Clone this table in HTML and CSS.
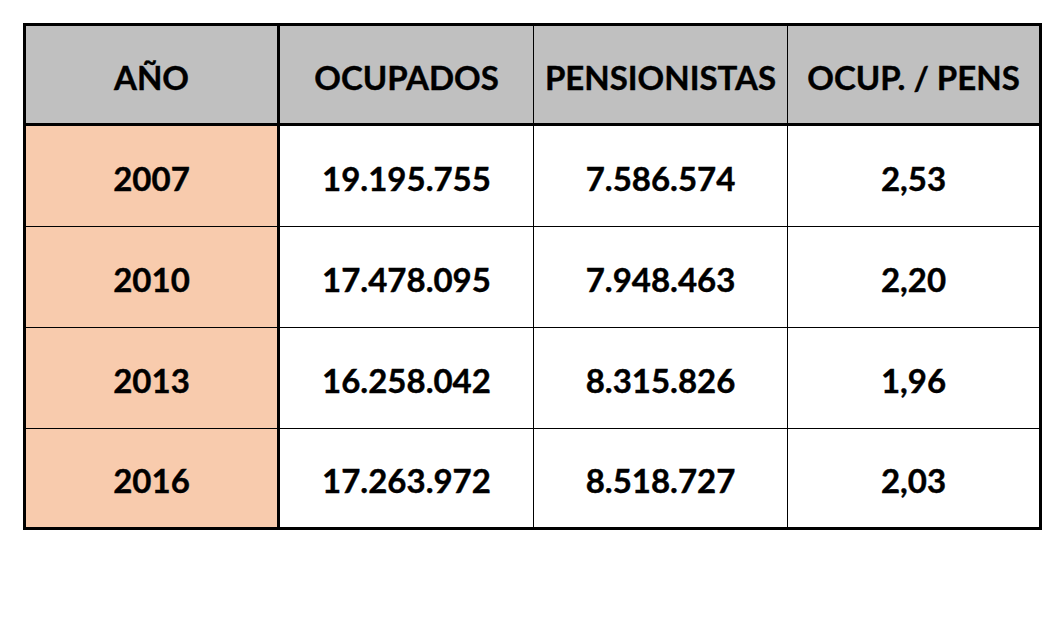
FILE: index.html
```html
<!DOCTYPE html>
<html lang="es">
<head>
<meta charset="utf-8">
<title>Ocupados / Pensionistas</title>
<link rel="stylesheet" href="styles.css">
</head>
<body>
<div class="grid">
  <div class="cell head first">AÑO</div>
  <div class="cell head">OCUPADOS</div>
  <div class="cell head">PENSIONISTAS</div>
  <div class="cell head last">OCUP. / PENS</div>

  <div class="cell year first">2007</div>
  <div class="cell">19.195.755</div>
  <div class="cell">7.586.574</div>
  <div class="cell last">2,53</div>

  <div class="cell year first">2010</div>
  <div class="cell">17.478.095</div>
  <div class="cell">7.948.463</div>
  <div class="cell last">2,20</div>

  <div class="cell year first">2013</div>
  <div class="cell">16.258.042</div>
  <div class="cell">8.315.826</div>
  <div class="cell last">1,96</div>

  <div class="cell year first bottom">2016</div>
  <div class="cell bottom">17.263.972</div>
  <div class="cell bottom">8.518.727</div>
  <div class="cell last bottom">2,03</div>
</div>
</body>
</html>
```

FILE: styles.css
```css
html, body {
  margin: 0;
  padding: 0;
  background: #ffffff;
}

body {
  padding: 23px 0 0 23px;
  font-family: "Lato", "Open Sans", "Liberation Sans", sans-serif;
}

.grid {
  display: grid;
  grid-template-columns: 254px 254px 254px 251px;
  grid-template-rows: 100px 101px 101px 101px 98px;
  width: 1019px;
  box-sizing: border-box;
  border: 3px solid #000;
}

.cell {
  box-sizing: border-box;
  display: flex;
  align-items: center;
  justify-content: center;
  padding-top: 4px;
  border-right: 1px solid #000;
  border-bottom: 1px solid #000;
  font-weight: 700;
  font-size: 33px;
  color: #000;
  background: #ffffff;
  white-space: nowrap;
  -webkit-text-stroke: 0.4px #000;
}

.cell.first {
  border-right: 3px solid #000;
}

.cell.year {
  background: #f8cbad;
}

.cell.head {
  background: #c0c0c0;
  border-bottom: 3px solid #000;
}

.cell.last {
  border-right: none;
}

.cell.bottom {
  border-bottom: none;
}
```
